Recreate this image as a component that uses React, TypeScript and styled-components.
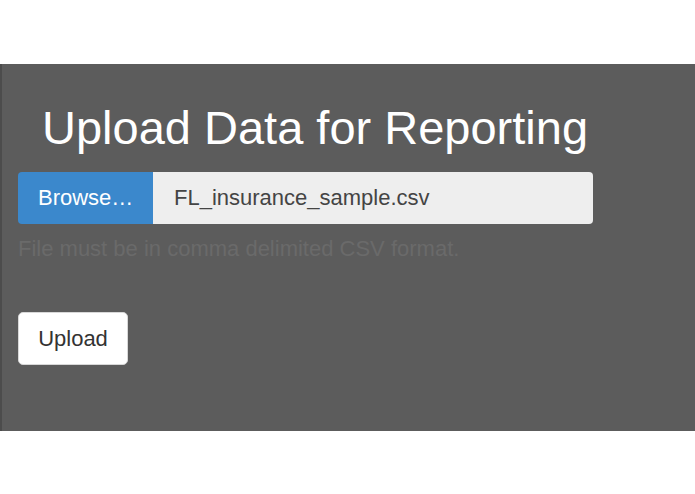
import React from "react";
import styled, { createGlobalStyle } from "styled-components";

const GlobalStyle = createGlobalStyle`
  html, body {
    margin: 0;
    padding: 0;
    background: #ffffff;
    font-family: "Liberation Sans", Arial, sans-serif;
  }
`;

const TopBand = styled.div`
  height: 64px;
  background: #ffffff;
`;

const Panel = styled.section`
  height: 367px;
  box-sizing: border-box;
  background: #5c5c5c;
  border-left: 2px solid #4c4c4c;
  padding: 38px 0 0 16px;
`;

const Title = styled.h1`
  margin: 0 0 18px 24px;
  font-size: 47px;
  line-height: 52px;
  font-weight: 400;
  color: #ffffff;
`;

const InputGroup = styled.div`
  display: flex;
  width: 575px;
  height: 52px;
  border-radius: 4px;
  overflow: hidden;
`;

const BrowseButton = styled.label`
  display: flex;
  align-items: center;
  padding: 0 20px;
  width: 135px;
  box-sizing: border-box;
  background: #3b88cc;
  color: #ffffff;
  font-size: 22px;
`;

const FileName = styled.div`
  flex: 1;
  display: flex;
  align-items: center;
  padding: 0 21px;
  background: #eeeeee;
  color: #444444;
  font-size: 22px;
`;

const HelpText = styled.p`
  margin: 12px 0 0;
  font-size: 22px;
  line-height: 26px;
  color: #6a6a6a;
`;

const UploadButton = styled.button`
  margin-top: 50px;
  width: 110px;
  height: 53px;
  border: 1px solid #d8d8d8;
  border-radius: 5px;
  background: #ffffff;
  color: #333333;
  font-family: inherit;
  font-size: 22px;
  padding: 0;
`;

const App: React.FC = () => {
  return (
    <>
      <GlobalStyle />
      <TopBand />
      <Panel>
        <Title>Upload Data for Reporting</Title>
        <InputGroup>
          <BrowseButton>Browse…</BrowseButton>
          <FileName>FL_insurance_sample.csv</FileName>
        </InputGroup>
        <HelpText>File must be in comma delimited CSV format.</HelpText>
        <UploadButton>Upload</UploadButton>
      </Panel>
    </>
  );
};

export default App;
